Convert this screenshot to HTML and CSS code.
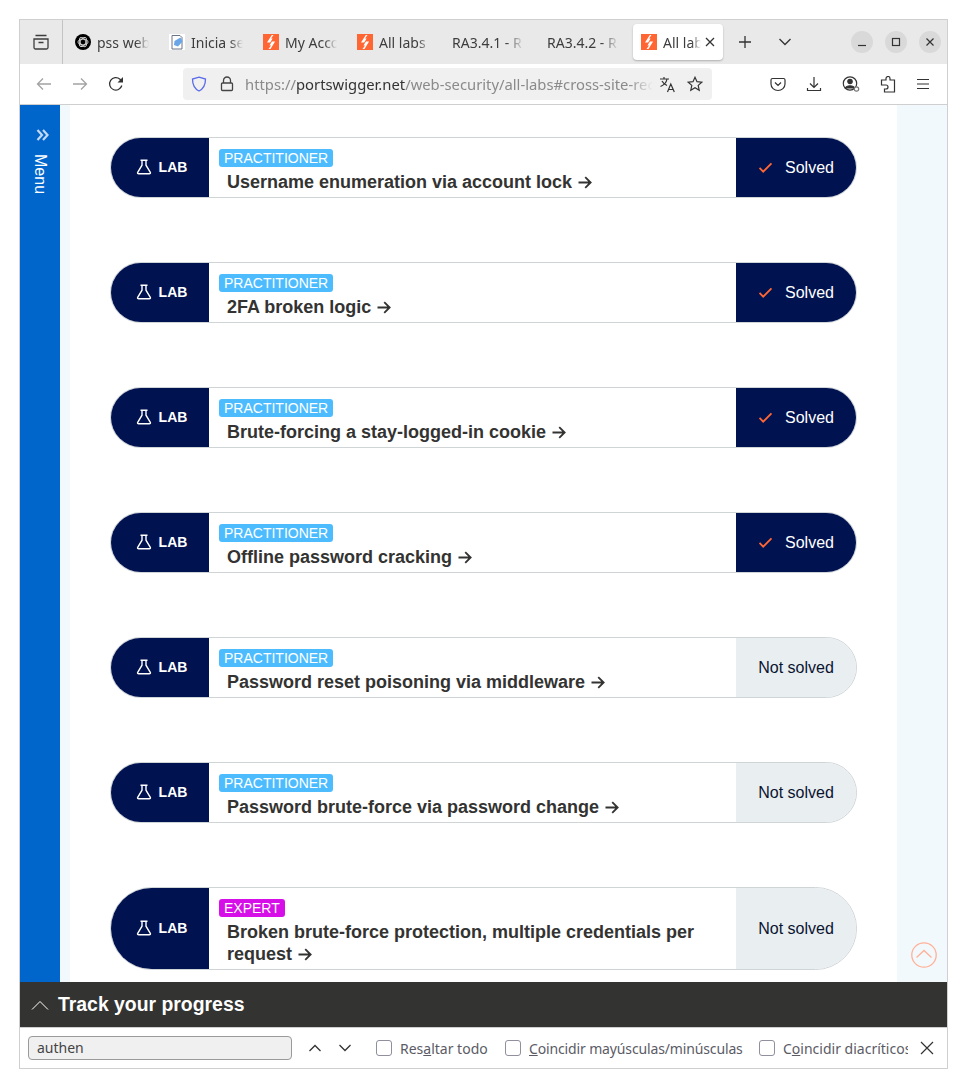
FILE: index.html
```html
<!doctype html>
<html>
 <head>
	<meta charset="UTF-8">
	<title>All labs</title>
	<link rel="stylesheet" href="styles.css">
 </head>
 <body>
	<svg class="defs" width="0" height="0">
		<symbol id="burp" viewBox="0 0 16 16">
			<rect width="16" height="16" fill="#ff6633"/>
			<path d="M8.800 1 4 8.500h3.200L9.600 4.600H8L10.500 1zM7.500 15l4.600-7.500H8.900L6.500 11.400h1.600L5.500 15z" fill="#fff"/>
		</symbol>
		<symbol id="flask" viewBox="0 0 16 16">
			<path d="M4.500 1.200h7M6 1.200v5L1.700 13.300c-.5 .9 .1 1.500 1 1.500h10.600c.9 0 1.500-.6 1-1.500L10 6.200v-5" fill="none" stroke="#fff" stroke-width="1.400"/>
		</symbol>
		<symbol id="check" viewBox="0 0 16 12">
			<path d="M1.500 6.500 5.500 10.500 14.500 1.500" fill="none" stroke="#ff6633" stroke-width="2"/>
		</symbol>
		<symbol id="arrow" viewBox="0 0 14 12">
			<path d="M1 6h11M7.200 1 12.200 6l-5 5" fill="none" stroke="#333332" stroke-width="1.700"/>
		</symbol>
	</svg>
	<div class="window">
		<div class="tabbar">
			<div class="tabview">
				<svg width="18" height="18" viewBox="0 0 18 18" fill="none" stroke="#3d3d3d" stroke-width="1.300"><path d="M3.500 2.500h11M2 6h14v8.500a1.500 1.500 0 0 1-1.500 1.500h-11A1.500 1.500 0 0 1 2 14.500zM6.500 9.500h5"/></svg>
			</div>
			<div class="tabs">
				<div class="tab tab_w1">
					<svg class="fav" viewBox="0 0 16 16"><circle cx="8" cy="8" r="8" fill="#000"/><g fill="none" stroke="#ddd" stroke-width=".9"><ellipse cx="8" cy="8" rx="5" ry="2.800"/><ellipse cx="8" cy="8" rx="5" ry="2.800" transform="rotate(60 8 8)"/><ellipse cx="8" cy="8" rx="5" ry="2.800" transform="rotate(120 8 8)"/></g></svg>
					<span class="tab_txt">pss web</span>
				</div>
				<div class="tab tab_w2">
					<svg class="fav" viewBox="0 0 16 16"><rect width="16" height="16" fill="#fff"/><path d="M3 1.500h8l2 2V15H3z" fill="none" stroke="#6b7488"/><path d="M5.500 7l6-3.500 2 4-4.500 5-4-1.500z" fill="#6aa5e8"/></svg>
					<span class="tab_txt">Inicia se</span>
				</div>
				<div class="tab tab_w3">
					<svg class="fav"><use href="#burp"/></svg>
					<span class="tab_txt">My Acco</span>
				</div>
				<div class="tab tab_w4">
					<svg class="fav"><use href="#burp"/></svg>
					<span class="tab_txt">All labs</span>
				</div>
				<div class="tab tab_w5">
					<span class="tab_txt tab_long">RA3.4.1 - R</span>
				</div>
				<div class="tab tab_w6">
					<span class="tab_txt tab_long">RA3.4.2 - R</span>
				</div>
				<div class="tab tab_active">
					<svg class="fav"><use href="#burp"/></svg>
					<span class="tab_txt">All lab</span>
					<svg class="tab_x" width="10" height="10" viewBox="0 0 10 10"><path d="M1 1l8 8M9 1l-8 8" stroke="#333" stroke-width="1.300"/></svg>
				</div>
			</div>
			<svg class="newtab" width="14" height="14" viewBox="0 0 14 14"><path d="M7 1v12M1 7h12" stroke="#333" stroke-width="1.300"/></svg>
			<svg class="tablist" width="14" height="8" viewBox="0 0 14 8"><path d="M1.500 1 7 6.500 12.500 1" fill="none" stroke="#333" stroke-width="1.300"/></svg>
			<div class="winbtns">
				<div class="winbtn"><svg width="10" height="10" viewBox="0 0 10 10"><path d="M1 8.500h8" stroke="#333" stroke-width="1.200"/></svg></div>
				<div class="winbtn"><svg width="10" height="10" viewBox="0 0 10 10"><rect x="1.500" y="1.500" width="7" height="7" fill="none" stroke="#333" stroke-width="1.200"/></svg></div>
				<div class="winbtn"><svg width="10" height="10" viewBox="0 0 10 10"><path d="M1.500 1.500l7 7M8.500 1.500l-7 7" stroke="#333" stroke-width="1.200"/></svg></div>
			</div>
		</div>
		<div class="toolbar">
			<svg class="nav_back" width="16" height="14" viewBox="0 0 16 14"><path d="M15 7H1.500M7 1.500 1.500 7 7 12.500" fill="none" stroke="#a3a3a3" stroke-width="1.300"/></svg>
			<svg class="nav_fwd" width="16" height="14" viewBox="0 0 16 14"><path d="M1 7h13.500M9 1.500 14.500 7 9 12.500" fill="none" stroke="#a3a3a3" stroke-width="1.300"/></svg>
			<svg class="nav_reload" width="16" height="16" viewBox="0 0 16 16"><path d="M13.800 9.500A6.200 6.200 0 1 1 12 3.300L14.500 5.500" fill="none" stroke="#333" stroke-width="1.300"/><path d="M15 1v5.500H9.500z" fill="#333"/></svg>
			<div class="urlbar">
				<svg class="shield" width="16" height="16" viewBox="0 0 16 16"><path d="M8 1.200 14.500 3c0 6-1.500 9.500-6.500 12C3 12.500 1.500 9 1.500 3z" fill="none" stroke="#5a6be8" stroke-width="1.300"/></svg>
				<svg class="lock" width="14" height="16" viewBox="0 0 14 16"><path d="M3.500 7V4.500a3.500 3.500 0 0 1 7 0V7M2.500 7h9A1 1 0 0 1 12.500 8v5.500a1 1 0 0 1-1 1h-9a1 1 0 0 1-1-1V8a1 1 0 0 1 1-1z" fill="none" stroke="#444" stroke-width="1.300"/></svg>
				<div class="url"><span class="url_dim">https://</span>portswigger.net<span class="url_dim">/web-security/all-labs#cross-site-rec</span></div>
				<svg class="translate" width="17" height="17" viewBox="0 0 17 17" fill="none" stroke="#333" stroke-width="1.200"><path d="M1 3h9M5 1v2M8 3c-.5 3-3 6-6.500 7.500M3 5c1 2 3 3.500 5 4.500M8.500 16l3.300-8 3.500 8M9.500 13.500h4.500"/></svg>
				<svg class="star" width="16" height="16" viewBox="0 0 16 16"><path d="M8 1.300l2 4.400 4.800.5-3.600 3.200 1 4.800L8 11.800l-4.200 2.400 1-4.800L1.200 6.200 6 5.700z" fill="none" stroke="#333" stroke-width="1.200"/></svg>
			</div>
			<div class="tools">
				<svg width="16" height="16" viewBox="0 0 16 16" fill="none" stroke="#333" stroke-width="1.200"><path d="M2.500 2.500h11A1.500 1.500 0 0 1 15 4v4A7 6.500 0 0 1 1 8V4A1.500 1.500 0 0 1 2.500 2.500zM5 6.500l3 3 3-3"/></svg>
				<svg width="16" height="16" viewBox="0 0 16 16" fill="none" stroke="#333" stroke-width="1.200"><path d="M8 1v10M4 7.500 8 11.500l4-4M1.500 12v2.500h13V12"/></svg>
				<svg width="18" height="18" viewBox="0 0 18 18" fill="none" stroke="#333" stroke-width="1.200"><circle cx="8" cy="8.500" r="6.700"/><circle cx="8" cy="6.500" r="2.200" fill="#333"/><path d="M3.500 13c1-3 8-3 9 0z" fill="#333"/><circle cx="14.500" cy="14" r="2.200" fill="#fff" stroke="#777"/></svg>
				<svg width="16" height="17" viewBox="0 0 16 17" fill="none" stroke="#333" stroke-width="1.200"><path d="M6 3V2.500a2 2 0 0 1 4 0V4h4.500v12H4.500v-3H6a2 2 0 0 0 0-4H1.500V4H6z"/></svg>
				<svg width="14" height="12" viewBox="0 0 14 12" stroke="#333" stroke-width="1.200"><path d="M1 1.500h12M1 6h12M1 10.500h12"/></svg>
			</div>
		</div>
		<div class="page">
			<div class="sidebar">
				<svg width="13" height="12" viewBox="0 0 13 12" fill="none" stroke="#c3d9f2" stroke-width="2.200"><path d="M1.500 1 6 6 1.500 11M7 1l4.500 5L7 11"/></svg>
				<div class="menu_txt">Menu</div>
			</div>
			<div class="edge_l"></div>
			<div class="labs">
				<div class="lab">
					<div class="lab_tag"><svg width="16" height="16"><use href="#flask"/></svg>LAB</div>
					<div class="lab_main">
						<span class="level">PRACTITIONER</span>
						<div class="lab_name">Username enumeration via account lock <svg class="arrow"><use href="#arrow"/></svg></div>
					</div>
					<div class="lab_status solved"><svg class="check"><use href="#check"/></svg>Solved</div>
				</div>
				<div class="lab">
					<div class="lab_tag"><svg width="16" height="16"><use href="#flask"/></svg>LAB</div>
					<div class="lab_main">
						<span class="level">PRACTITIONER</span>
						<div class="lab_name">2FA broken logic <svg class="arrow"><use href="#arrow"/></svg></div>
					</div>
					<div class="lab_status solved"><svg class="check"><use href="#check"/></svg>Solved</div>
				</div>
				<div class="lab">
					<div class="lab_tag"><svg width="16" height="16"><use href="#flask"/></svg>LAB</div>
					<div class="lab_main">
						<span class="level">PRACTITIONER</span>
						<div class="lab_name">Brute-forcing a stay-logged-in cookie <svg class="arrow"><use href="#arrow"/></svg></div>
					</div>
					<div class="lab_status solved"><svg class="check"><use href="#check"/></svg>Solved</div>
				</div>
				<div class="lab">
					<div class="lab_tag"><svg width="16" height="16"><use href="#flask"/></svg>LAB</div>
					<div class="lab_main">
						<span class="level">PRACTITIONER</span>
						<div class="lab_name">Offline password cracking <svg class="arrow"><use href="#arrow"/></svg></div>
					</div>
					<div class="lab_status solved"><svg class="check"><use href="#check"/></svg>Solved</div>
				</div>
				<div class="lab">
					<div class="lab_tag"><svg width="16" height="16"><use href="#flask"/></svg>LAB</div>
					<div class="lab_main">
						<span class="level">PRACTITIONER</span>
						<div class="lab_name">Password reset poisoning via middleware <svg class="arrow"><use href="#arrow"/></svg></div>
					</div>
					<div class="lab_status">Not solved</div>
				</div>
				<div class="lab">
					<div class="lab_tag"><svg width="16" height="16"><use href="#flask"/></svg>LAB</div>
					<div class="lab_main">
						<span class="level">PRACTITIONER</span>
						<div class="lab_name">Password brute-force via password change <svg class="arrow"><use href="#arrow"/></svg></div>
					</div>
					<div class="lab_status">Not solved</div>
				</div>
				<div class="lab">
					<div class="lab_tag"><svg width="16" height="16"><use href="#flask"/></svg>LAB</div>
					<div class="lab_main">
						<span class="level expert">EXPERT</span>
						<div class="lab_name">Broken brute-force protection, multiple credentials per request <svg class="arrow"><use href="#arrow"/></svg></div>
					</div>
					<div class="lab_status">Not solved</div>
				</div>
			</div>
			<div class="edge_r">
				<svg class="to_top" width="26" height="26" viewBox="0 0 26 26" fill="none" stroke="#ffb199" stroke-width="1.300"><circle cx="13" cy="13" r="12.200"/><path d="M5.500 15.500 13 8.500l7.500 7"/></svg>
			</div>
		</div>
		<div class="track">
			<svg width="18" height="10" viewBox="0 0 18 10"><path d="M1 9.500 9 1.500l8 8" fill="none" stroke="#fff"/></svg>
			<span>Track your progress</span>
		</div>
		<div class="findbar">
			<div class="find_input">authen</div>
			<svg class="find_up" width="14" height="8" viewBox="0 0 14 8"><path d="M1.500 7 7 1.500 12.500 7" fill="none" stroke="#333" stroke-width="1.300"/></svg>
			<svg class="find_down" width="14" height="8" viewBox="0 0 14 8"><path d="M1.500 1 7 6.500 12.500 1" fill="none" stroke="#333" stroke-width="1.300"/></svg>
			<div class="opt opt_1"><i class="box"></i><span>Res<u>a</u>ltar todo</span></div>
			<div class="opt opt_2"><i class="box"></i><span><u>C</u>oincidir mayúsculas/minúsculas</span></div>
			<div class="opt opt_3"><i class="box"></i><span>C<u>o</u>incidir diacríticos</span></div>
			<svg class="find_close" width="14" height="14" viewBox="0 0 14 14"><path d="M1 1l12 12M13 1 1 13" stroke="#333" stroke-width="1.200"/></svg>
		</div>
	</div>
 </body>
</html>
```

FILE: styles.css
```css
*{box-sizing:border-box}
body{margin:0;background:#fff}
.defs{display:block}
svg{display:block;flex:none}

/*整个窗口*/
.window{
	width:929px;height:1050px;
	margin:19px 0 0 19px;
	border:1px solid #cfcfcf;
	display:flex;flex-direction:column;
	font-family:"Noto Sans",sans-serif;
	color:#3d3d3d;
}

/*标签栏*/
.tabbar{
	height:44px;flex:none;
	background:#e9e9e9;
	display:flex;align-items:center;
}
.tabview{
	width:43px;height:44px;
	border-right:1px solid #c4c4c4;
	display:flex;align-items:center;justify-content:center;
	padding-right:1px;
}
.tabs{display:flex;align-items:center;margin-left:12px}
.tab{
	height:36px;
	display:flex;align-items:center;
	font-size:14px;
	overflow:hidden;
}
.tab_w1{width:94px}
.tab_w2{width:94px}
.tab_w3{width:94px}
.tab_w4{width:95px}
.tab_w5{width:95px}
.tab_w6{width:86px}
.tab_txt{
	width:52px;
	white-space:nowrap;
	overflow:hidden;
	-webkit-mask-image:linear-gradient(to right,#000 75%,transparent);
	mask-image:linear-gradient(to right,#000 75%,transparent);
}
.tab_long{width:72px}
.fav{width:16px;height:16px;margin-right:6px;flex:none}
.tab_active{
	width:90px;
	background:#fff;
	border-radius:4px;
	box-shadow:0 1px 2px rgba(0,0,0,.25);
	padding:0 8px;
}
.tab_active .tab_txt{width:38px}
.tab_x{margin-left:4px}
.newtab{margin-left:15px}
.tablist{margin-left:26px}
.winbtns{display:flex;gap:12px;margin-left:auto;margin-right:6px}
.winbtn{
	width:22px;height:22px;border-radius:50%;
	background:#d9d9d9;
	display:flex;align-items:center;justify-content:center;
}

/*地址栏*/
.toolbar{
	height:41px;flex:none;
	background:#fff;
	border-bottom:1px solid #cfcfcf;
	display:flex;align-items:center;
}
.nav_back{margin-left:16px}
.nav_fwd{margin-left:20px}
.nav_reload{margin-left:20px}
.urlbar{
	width:529px;height:32px;
	margin-left:59px;
	background:#f0f0f1;
	border-radius:4px;
	display:flex;align-items:center;
	padding-left:8px;
}
.lock{margin-left:13px}
.url{
	width:408px;
	margin-left:11px;
	font-size:14.800px;
	white-space:nowrap;
	overflow:hidden;
	color:#333;
	-webkit-mask-image:linear-gradient(to right,#000 94%,transparent);
	mask-image:linear-gradient(to right,#000 94%,transparent);
}
.url_dim{color:#8a8a8a}
.translate{margin-left:6px}
.star{margin-left:11px}
.tools{display:flex;align-items:center;gap:20px;margin-left:auto;margin-right:17px}

/*页面*/
.page{flex:1;display:flex;min-height:0;overflow:hidden;background:#fff}
.sidebar{
	width:40px;flex:none;
	background:#0066cc;
	display:flex;flex-direction:column;align-items:center;
	padding:24px 0 0 4px;
}
.menu_txt{
	writing-mode:vertical-rl;
	margin:13px 4px 0 0;
	color:#fff;
	font:16px "Liberation Sans",sans-serif;
}
.edge_l{width:10px;flex:none;background:#f1f9fc}
.labs{
	width:827px;flex:none;
	padding:32px 40px 0 40px;
	display:flex;flex-direction:column;gap:64px;
	font-family:"Liberation Sans",sans-serif;
}
.edge_r{flex:1;background:#f1f9fc;position:relative}
.to_top{position:absolute;left:14px;top:837px}

.lab{
	width:747px;
	flex:none;
	display:flex;
	border:1px solid #cfd4d7;
	border-radius:50px;
	overflow:hidden;
}
.lab_tag{
	width:98px;flex:none;
	background:#00124f;
	color:#fff;
	font-size:14px;font-weight:bold;
	display:flex;align-items:center;justify-content:center;
	gap:7px;
	padding:0 0 2px 3px;
}
.lab_main{flex:1;padding:11px 38px 4px 10px;min-width:0;background:#fff}
.level{
	display:block;
	width:max-content;
	background:#4cbcff;
	color:#fff;
	font-size:14px;line-height:18px;
	padding:0 5px;
	border-radius:3px;
}
.expert{background:#d60ee8}
.lab_name{
	margin:4px 0 0 8px;
	color:#333332;
	font-size:18px;font-weight:bold;line-height:22px;
}
.arrow{display:inline-block;width:16px;height:13px;vertical-align:-1px}
.lab_status{
	width:120px;flex:none;
	background:#e9eef1;
	color:#0a1430;
	font-size:16px;
	display:flex;align-items:center;justify-content:center;
}
.lab_status.solved{
	background:#00124f;
	color:#fff;
}
.check{width:15px;height:11px;margin:0 12px 0 0}

/*底部条*/
.track{
	height:46px;flex:none;
	background:#333332;
	border-bottom:1px solid #cfcfcf;
	color:#fff;
	display:flex;align-items:center;
	padding-left:11px;
	gap:9px;
	font:bold 19.400px "Liberation Sans",sans-serif;
}
.findbar{
	height:40px;flex:none;
	background:#fff;
	display:flex;align-items:center;
	font-size:14px;
	color:#5b5b66;
}
.find_input{
	width:264px;height:24px;
	margin-left:8px;
	background:#f0f0f1;
	border:1px solid #9a9a9a;
	border-radius:4px;
	padding-left:8px;
	line-height:21px;
	color:#444;
}
.find_up{margin-left:16px}
.find_down{margin-left:16px}
.opt{display:flex;align-items:center;gap:8px;white-space:nowrap;overflow:hidden}
.box{width:16px;height:16px;flex:none;border:1px solid #8f8f9d;border-radius:3px}
.opt_1{margin-left:24px;width:129px}
.opt_2{width:254px}
.opt_2 span{letter-spacing:-.14px}
.opt_3{width:149px}
.find_close{margin-left:12px}
```
